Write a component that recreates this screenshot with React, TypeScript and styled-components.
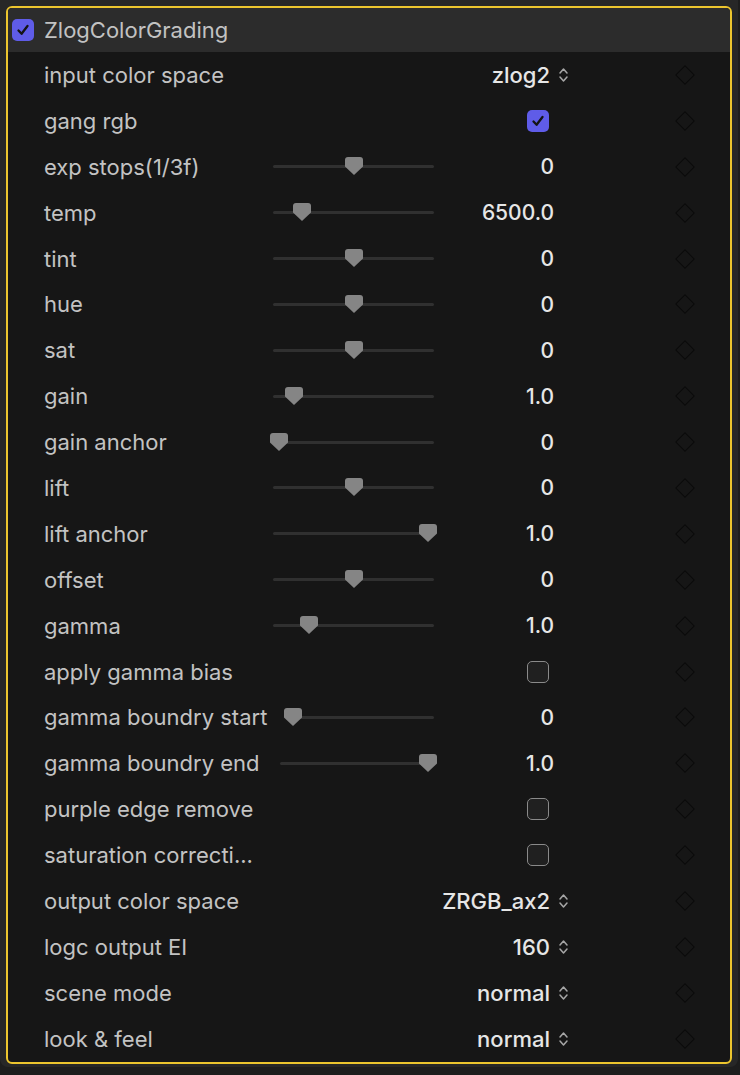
import styled, { createGlobalStyle } from "styled-components";

const GlobalStyle = createGlobalStyle`
  html, body {
    margin: 0;
    padding: 0;
    background: #1d1d1d;
  }
  body {
    font-family: Inter, "Noto Sans", "Liberation Sans", sans-serif;
    -webkit-font-smoothing: antialiased;
  }
`;

const Frame = styled.div`
  width: 738px;
  height: 1067px;
  background: #272727;
  border-radius: 0 0 8px 8px;
  padding: 6px 0 0 6px;
  box-sizing: border-box;
`;

const Panel = styled.div`
  width: 726px;
  border: 2px solid #ecc52e;
  border-radius: 6px;
  background: #161616;
  overflow: hidden;
  box-sizing: border-box;
`;

const Header = styled.div`
  display: flex;
  align-items: center;
  gap: 10px;
  height: 44px;
  padding-left: 4px;
  background: #2c2c2c;
`;

const Title = styled.span`
  color: #c2c2c2;
  font-size: 22px;
`;

const Row = styled.div`
  display: flex;
  align-items: center;
  height: 45.9px;
  padding-left: 36px;
`;

const Label = styled.span`
  flex: none;
  color: #c3c3c3;
  font-size: 22px;
  white-space: nowrap;
`;

const SliderArea = styled.div`
  flex: 1;
  min-width: 0;
  display: flex;
  justify-content: flex-end;
  margin-left: 20px;
`;

const Track = styled.div`
  position: relative;
  flex: 0 1 161px;
  min-width: 0;
  height: 3px;
  border-radius: 2px;
  background: #303030;
`;

const Thumb = styled.svg`
  position: absolute;
  top: -8px;
  width: 18px;
  height: 18px;
  margin-left: -9px;
`;

const Spacer = styled.div`
  flex: 1;
`;

const ValueCell = styled.div`
  flex: none;
  width: 137px;
  display: flex;
  justify-content: flex-end;
  align-items: center;
`;

const Number = styled.span`
  color: #e6e6e6;
  font-size: 21px;
  font-weight: 500;
  margin-right: 17px;
`;

const Select = styled.span`
  display: flex;
  align-items: center;
  gap: 8px;
  margin-right: 2px;
  color: #e6e6e6;
  font-size: 22px;
  font-weight: 500;
`;

const Box = styled.span<{ $on?: boolean; $gap?: number }>`
  flex: none;
  width: 22px;
  height: 22px;
  box-sizing: border-box;
  border-radius: 5px;
  display: flex;
  align-items: center;
  justify-content: center;
  margin-right: ${(p) => p.$gap ?? 22}px;
  background: ${(p) => (p.$on ? "#5f5ce8" : "#202020")};
  border: ${(p) => (p.$on ? "none" : "1.5px solid #8a8a8a")};
`;

const KeyCell = styled.div`
  flex: none;
  width: 159px;
  box-sizing: border-box;
  display: flex;
  justify-content: flex-end;
  padding-right: 35px;
`;

const Diamond = styled.span`
  width: 14px;
  height: 14px;
  margin: 3px;
  box-sizing: border-box;
  border: 1.5px solid #0b0b0b;
  transform: rotate(45deg);
`;

const Check = () => (
  <svg width="14" height="14" viewBox="0 0 14 14">
    <path d="M2.5 7.5 L5.6 10.8 L11.5 3" fill="none" stroke="#141414" strokeWidth="2.3" strokeLinecap="round" strokeLinejoin="round" />
  </svg>
);

const Chevrons = () => (
  <svg width="11" height="18" viewBox="0 0 11 18">
    <path d="M2 7 L5.5 3 L9 7 M2 11 L5.5 15 L9 11" fill="none" stroke="#a6a6a6" strokeWidth="1.5" strokeLinecap="round" strokeLinejoin="round" />
  </svg>
);

type Param =
  | { label: string; kind: "select"; value: string }
  | { label: string; kind: "check"; on: boolean }
  | { label: string; kind: "slider"; value: string; pos: number };

const params: Param[] = [
  { label: "input color space", kind: "select", value: "zlog2" },
  { label: "gang rgb", kind: "check", on: true },
  { label: "exp stops(1/3f)", kind: "slider", value: "0", pos: 0.5 },
  { label: "temp", kind: "slider", value: "6500.0", pos: 0.155 },
  { label: "tint", kind: "slider", value: "0", pos: 0.5 },
  { label: "hue", kind: "slider", value: "0", pos: 0.5 },
  { label: "sat", kind: "slider", value: "0", pos: 0.5 },
  { label: "gain", kind: "slider", value: "1.0", pos: 0.1 },
  { label: "gain anchor", kind: "slider", value: "0", pos: 0 },
  { label: "lift", kind: "slider", value: "0", pos: 0.5 },
  { label: "lift anchor", kind: "slider", value: "1.0", pos: 1 },
  { label: "offset", kind: "slider", value: "0", pos: 0.5 },
  { label: "gamma", kind: "slider", value: "1.0", pos: 0.2 },
  { label: "apply gamma bias", kind: "check", on: false },
  { label: "gamma boundry start", kind: "slider", value: "0", pos: 0 },
  { label: "gamma boundry end", kind: "slider", value: "1.0", pos: 1 },
  { label: "purple edge remove", kind: "check", on: false },
  { label: "saturation correcti...", kind: "check", on: false },
  { label: "output color space", kind: "select", value: "ZRGB_ax2" },
  { label: "logc output EI", kind: "select", value: "160" },
  { label: "scene mode", kind: "select", value: "normal" },
  { label: "look & feel", kind: "select", value: "normal" },
];

function Slider({ pos }: { pos: number }) {
  return (
    <SliderArea>
      <Track>
        <Thumb viewBox="0 0 18 18" style={{ left: `calc(6px + ${pos} * (100% - 12px))` }}>
          <path d="M3 0 H15 Q18 0 18 3 V9.5 L9 18 L0 9.5 V3 Q0 0 3 0 Z" fill="#858585" />
        </Thumb>
      </Track>
    </SliderArea>
  );
}

function ParamRow({ p }: { p: Param }) {
  return (
    <Row>
      <Label>{p.label}</Label>
      {p.kind === "slider" ? <Slider pos={p.pos} /> : <Spacer />}
      <ValueCell>
        {p.kind === "slider" && <Number>{p.value}</Number>}
        {p.kind === "select" && (
          <Select>
            {p.value}
            <Chevrons />
          </Select>
        )}
        {p.kind === "check" && <Box $on={p.on}>{p.on && <Check />}</Box>}
      </ValueCell>
      <KeyCell>
        <Diamond />
      </KeyCell>
    </Row>
  );
}

export default function App() {
  return (
    <>
      <GlobalStyle />
      <Frame>
        <Panel>
          <Header>
            <Box $on $gap={0}>
              <Check />
            </Box>
            <Title>ZlogColorGrading</Title>
          </Header>
          {params.map((p) => (
            <ParamRow key={p.label} p={p} />
          ))}
        </Panel>
      </Frame>
    </>
  );
}
